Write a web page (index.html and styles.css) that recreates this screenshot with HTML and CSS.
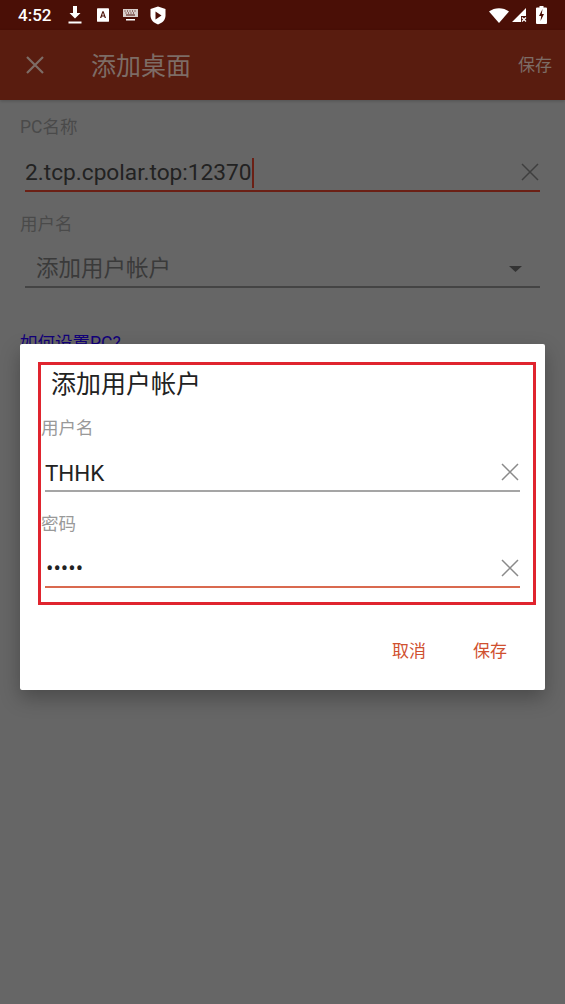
FILE: index.html
```html
<!DOCTYPE html>
<html lang="zh-CN">
<head>
  <meta charset="UTF-8" />
  <meta name="viewport" content="width=device-width, initial-scale=1" />
  <title>添加桌面</title>
  <link rel="stylesheet" href="styles.css">
</head>
<body>
  <div class="screen">
    <div class="statusBar">
      <span class="clock">4:52</span>
      <svg class="statusIcon iconDownload" width="16" height="20" viewBox="0 0 16 20"><path d="M6 1h4v7h3.500L8 13.500 2.500 8H6zM1.500 16.500h13v2h-13z" fill="#fff"/></svg>
      <svg class="statusIcon iconFont" width="12" height="14" viewBox="0 0 14 16"><path d="M1 0h12q1 0 1 1v14q0 1-1 1H1q-1 0-1-1V1q0-1 1-1z" fill="#fff"/><path d="M3.500 11.500 6.300 3.500h1.400l2.800 8H9L8.400 9.700H5.600L5 11.500zM6 8.500h2L7 5z" fill="#4a0f06"/></svg>
      <svg class="statusIcon iconKeyboard" width="17" height="14" viewBox="0 0 17 14"><path d="M1 1h15v8H1z" fill="#d8cfcc"/><path d="M2.500 3h1M5 3h1M7.500 3h1M10 3h1M12.500 3h1M3.500 5h1M6 5h1M8.500 5h1M11 5h1M4 7h9" stroke="#4a0f06" stroke-width="1"/><path d="M4 11h9v1.500H4z" fill="#fff"/></svg>
      <svg class="statusIcon iconShield" width="16" height="19" viewBox="0 0 16 19"><path d="M8 .5 15.500 3v6.500c0 4.500-3.300 7.500-7.500 9-4.200-1.500-7.500-4.500-7.500-9V3z" fill="#fff"/><path d="M5.500 5.500 11.500 9.500 5.500 13.500z" fill="#4a0f06"/></svg>
      <span class="statusSpacer"></span>
      <svg class="statusIcon iconWifi" width="20" height="15" viewBox="0 0 20 15"><path d="M0 3.500C5.500-1 14.500-1 20 3.500L10 15z" fill="#fff"/></svg>
      <svg class="statusIcon iconSignal" width="15" height="15" viewBox="0 0 15 15"><path d="M14 0v8H9v6H0z" fill="#fff"/><path d="M10 9.500l4 4M14 9.500l-4 4" stroke="#fff" stroke-width="1.200"/></svg>
      <svg class="statusIcon iconBattery" width="11" height="18" viewBox="0 0 11 18"><path d="M3.500 0h4v1.500H10q1 0 1 1V17q0 1-1 1H1q-1 0-1-1V2.500q0-1 1-1h2.500z" fill="#fff"/><path d="M6.500 3 3 10h2.200L4.500 15 8 8H5.800z" fill="#4a0f06"/></svg>
    </div>

    <div class="appBar">
      <svg class="closeIcon" width="18" height="18" viewBox="0 0 18 18"><path d="M1 1l16 16M17 1 1 17" stroke="#7d6c66" stroke-width="2.200"/></svg>
      <div class="appTitle">添加桌面</div>
      <div class="appSave">保存</div>
    </div>

    <div class="form">
      <div class="fieldLabel">PC名称</div>
      <div class="inputRow inputFocus">
        <span class="inputText">2.tcp.cpolar.top:12370</span><span class="caret"></span>
        <svg class="clearIcon" width="18" height="18" viewBox="0 0 18 18"><path d="M1 1l16 16M17 1 1 17" stroke="#3f3f3f" stroke-width="1.500"/></svg>
      </div>
      <div class="fieldLabel">用户名</div>
      <div class="inputRow selectRow">
        <span class="selectText">添加用户帐户</span>
        <svg class="selectArrow" width="13" height="6" viewBox="0 0 13 6"><path d="M0 0h13L6.500 6z" fill="#333"/></svg>
      </div>
      <div class="helpLink">如何设置PC?</div>
    </div>
  </div>

  <!-- Add account dialog -->
  <div class="dialog">
    <div class="dialogBox">
      <div class="dialogTitle">添加用户帐户</div>
      <div class="dlgLabel">用户名</div>
      <div class="dlgInput">
        <span class="dlgText">THHK</span>
        <svg class="clearIcon" width="18" height="18" viewBox="0 0 18 18"><path d="M1 1l16 16M17 1 1 17" stroke="#8a8a8a" stroke-width="1.500"/></svg>
      </div>
      <div class="dlgLabel dlgLabelNext">密码</div>
      <div class="dlgInput dlgFocus">
        <span class="dlgDots">•••••</span>
        <svg class="clearIcon" width="18" height="18" viewBox="0 0 18 18"><path d="M1 1l16 16M17 1 1 17" stroke="#8a8a8a" stroke-width="1.500"/></svg>
      </div>
    </div>
    <div class="dialogButtons">
      <span class="dlgBtn">取消</span>
      <span class="dlgBtn">保存</span>
    </div>
  </div>
</body>
</html>
```

FILE: styles.css
```css
* {
  box-sizing: border-box;
}
html, body {
  margin: 0;
  padding: 0;
}
body {
  font-family: Roboto, "Noto Sans CJK SC", sans-serif;
  background-color: #666;
  width: 565px;
  height: 1004px;
  overflow: hidden;
  position: relative;
}
.screen {
  height: 1004px;
  background-color: #666;
}
.statusBar {
  height: 30px;
  background-color: #4a0f06;
  display: flex;
  align-items: center;
  padding: 0 18px 0 18px;
  color: #fff;
}
.clock {
  font-size: 17px;
  font-weight: 500;
  width: 49px;
}
.statusIcon {
  display: block;
  flex: none;
}
.iconFont {
  margin-left: 14px;
}
.iconKeyboard {
  margin-left: 13px;
}
.iconShield {
  margin-left: 11px;
}
.statusSpacer {
  flex: 1;
}
.iconSignal {
  margin-left: 3px;
}
.iconBattery {
  margin-left: 9px;
}
.appBar {
  height: 70px;
  background-color: #591c0f;
  display: flex;
  align-items: center;
  padding: 0 13px 0 26px;
  box-shadow: 0 1px 3px rgba(0,0,0,0.2);
}
.closeIcon {
  display: block;
  margin-right: 47px;
}
.appTitle {
  flex: 1;
  font-size: 25px;
  color: #7d6c66;
  padding-bottom: 2px;
}
.appSave {
  font-size: 17px;
  color: #7d6c66;
  padding-bottom: 3px;
}
.form {
  padding: 15px 25px 0 20px;
}
.fieldLabel {
  font-size: 17.500px;
  line-height: 24px;
  color: #4a4a4a;
}
.inputRow {
  margin-left: 5px;
  height: 53px;
  display: flex;
  align-items: flex-end;
  border-bottom: 2px solid #444;
  padding-bottom: 2px;
  color: #222;
}
.inputFocus {
  border-bottom-color: #6b2015;
  margin-bottom: 20px;
}
.inputText {
  font-size: 22.700px;
  line-height: 30px;
}
.caret {
  width: 2px;
  height: 30px;
  background-color: #6b2015;
}
.clearIcon {
  display: block;
  margin-left: auto;
  margin-right: 1px;
  margin-bottom: 7px;
  flex: none;
}
.selectRow {
  height: 52px;
  padding-bottom: 3px;
  margin-bottom: 43px;
}
.selectText {
  margin-left: 11px;
  font-size: 22.500px;
  line-height: 30px;
  color: #3a3a3a;
}
.selectArrow {
  display: block;
  margin-left: auto;
  margin-right: 18px;
  margin-bottom: 11px;
}
.helpLink {
  font-size: 17.500px;
  line-height: 24px;
  color: #12007a;
}
.dialog {
  position: absolute;
  left: 20px;
  top: 344px;
  width: 525px;
  height: 346px;
  background-color: #fff;
  border-radius: 2px;
  padding: 18px 9px 0 18px;
  box-shadow: 0 8px 20px rgba(0,0,0,0.28);
}
.dialogBox {
  height: 243px;
  border: 3px solid #e0242e;
}
.dialogTitle {
  font-size: 25px;
  line-height: 36px;
  color: #222;
  padding: 2px 0 0 10px;
  height: 38px;
}
.dlgLabel {
  font-size: 17.500px;
  line-height: 24px;
  color: #999;
  margin-top: 13px;
}
.dlgLabelNext {
  margin-top: 20px;
}
.dlgInput {
  margin: 0 13px 0 4px;
  height: 52px;
  display: flex;
  align-items: flex-end;
  border-bottom: 2px solid #a5a5a5;
  padding-bottom: 2px;
}
.dlgFocus {
  border-bottom-color: #d9694f;
}
.dlgText {
  font-size: 22.400px;
  line-height: 30px;
  color: #222;
}
.dlgDots {
  font-size: 22px;
  line-height: 30px;
  color: #222;
  margin-left: 1px;
}
.dialogButtons {
  display: flex;
  justify-content: flex-end;
  gap: 47px;
  padding: 34px 29px 0 0;
}
.dlgBtn {
  font-size: 17px;
  line-height: 24px;
  color: #d0502f;
}
```
